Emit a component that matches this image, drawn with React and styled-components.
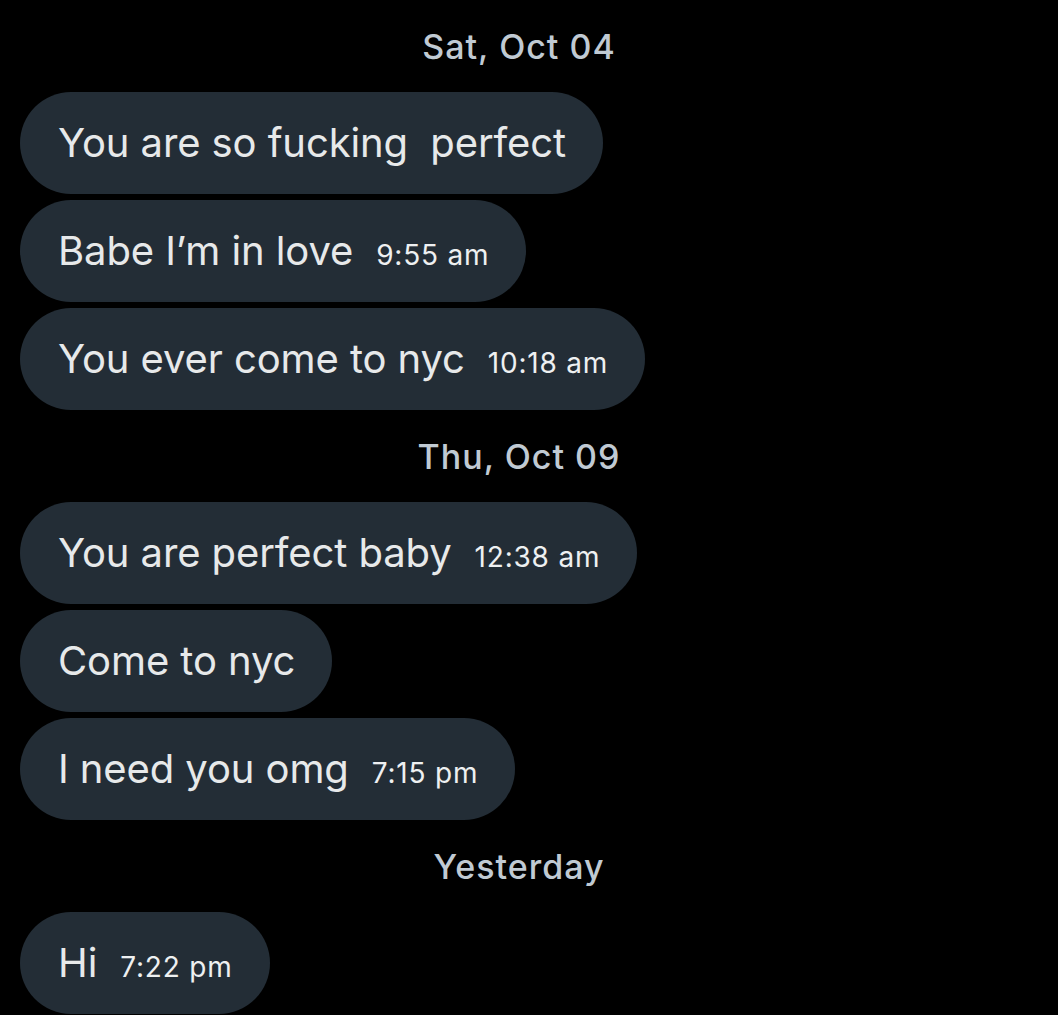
// DM thread: date separators and received message bubbles
import React from "react";
import styled, { createGlobalStyle } from "styled-components";

const thread = [
  { date: "Sat, Oct 04" },
  { text: "You are so fucking\u00a0 perfect" },
  { text: "Babe I’m in love", time: "9:55 am" },
  { text: "You ever come to nyc", time: "10:18 am" },
  { date: "Thu, Oct 09" },
  { text: "You are perfect baby", time: "12:38 am" },
  { text: "Come to nyc" },
  { text: "I need you omg", time: "7:15 pm" },
  { date: "Yesterday" },
  { text: "Hi", time: "7:22 pm" },
];

const App = () => {
  return (
    <>
      <GlobalStyle />
      <Thread>
        {thread.map((item, i) =>
          item.date ? (
            <DateRow key={i}>{item.date}</DateRow>
          ) : (
            <Bubble key={i}>
              <Text>{item.text}</Text>
              {item.time && <Time>{item.time}</Time>}
            </Bubble>
          )
        )}
      </Thread>
    </>
  );
};

export default App;

const GlobalStyle = createGlobalStyle`
  html, body {
    margin: 0;
    background: #000;
  }
  body {
    font-family: Inter, Roboto, "Liberation Sans", sans-serif;
    -webkit-font-smoothing: antialiased;
  }
`;

const Thread = styled.div`
  width: 1038px;
  box-sizing: border-box;
  padding: 6px 20px 0;
  display: flex;
  flex-direction: column;
  align-items: flex-start;
  gap: 6px;
`;

const DateRow = styled.div`
  align-self: stretch;
  flex-shrink: 0;
  height: 80px;
  display: flex;
  align-items: center;
  justify-content: center;
  font-size: 34px;
  font-weight: 500;
  color: #c0cad3;
  letter-spacing: 1px;
`;

const Bubble = styled.div`
  flex-shrink: 0;
  height: 102px;
  box-sizing: border-box;
  padding: 0 37px 0 38px;
  display: flex;
  align-items: baseline;
  gap: 23px;
  background: #232d36;
  border-radius: 51px;
  color: #e7e9ea;
  line-height: 102px;
`;

const Text = styled.span`
  font-size: 40px;
  letter-spacing: -0.1px;
  white-space: pre;
`;

const Time = styled.span`
  font-size: 28px;
  letter-spacing: 0.8px;
  color: #eef0f1;
`;
